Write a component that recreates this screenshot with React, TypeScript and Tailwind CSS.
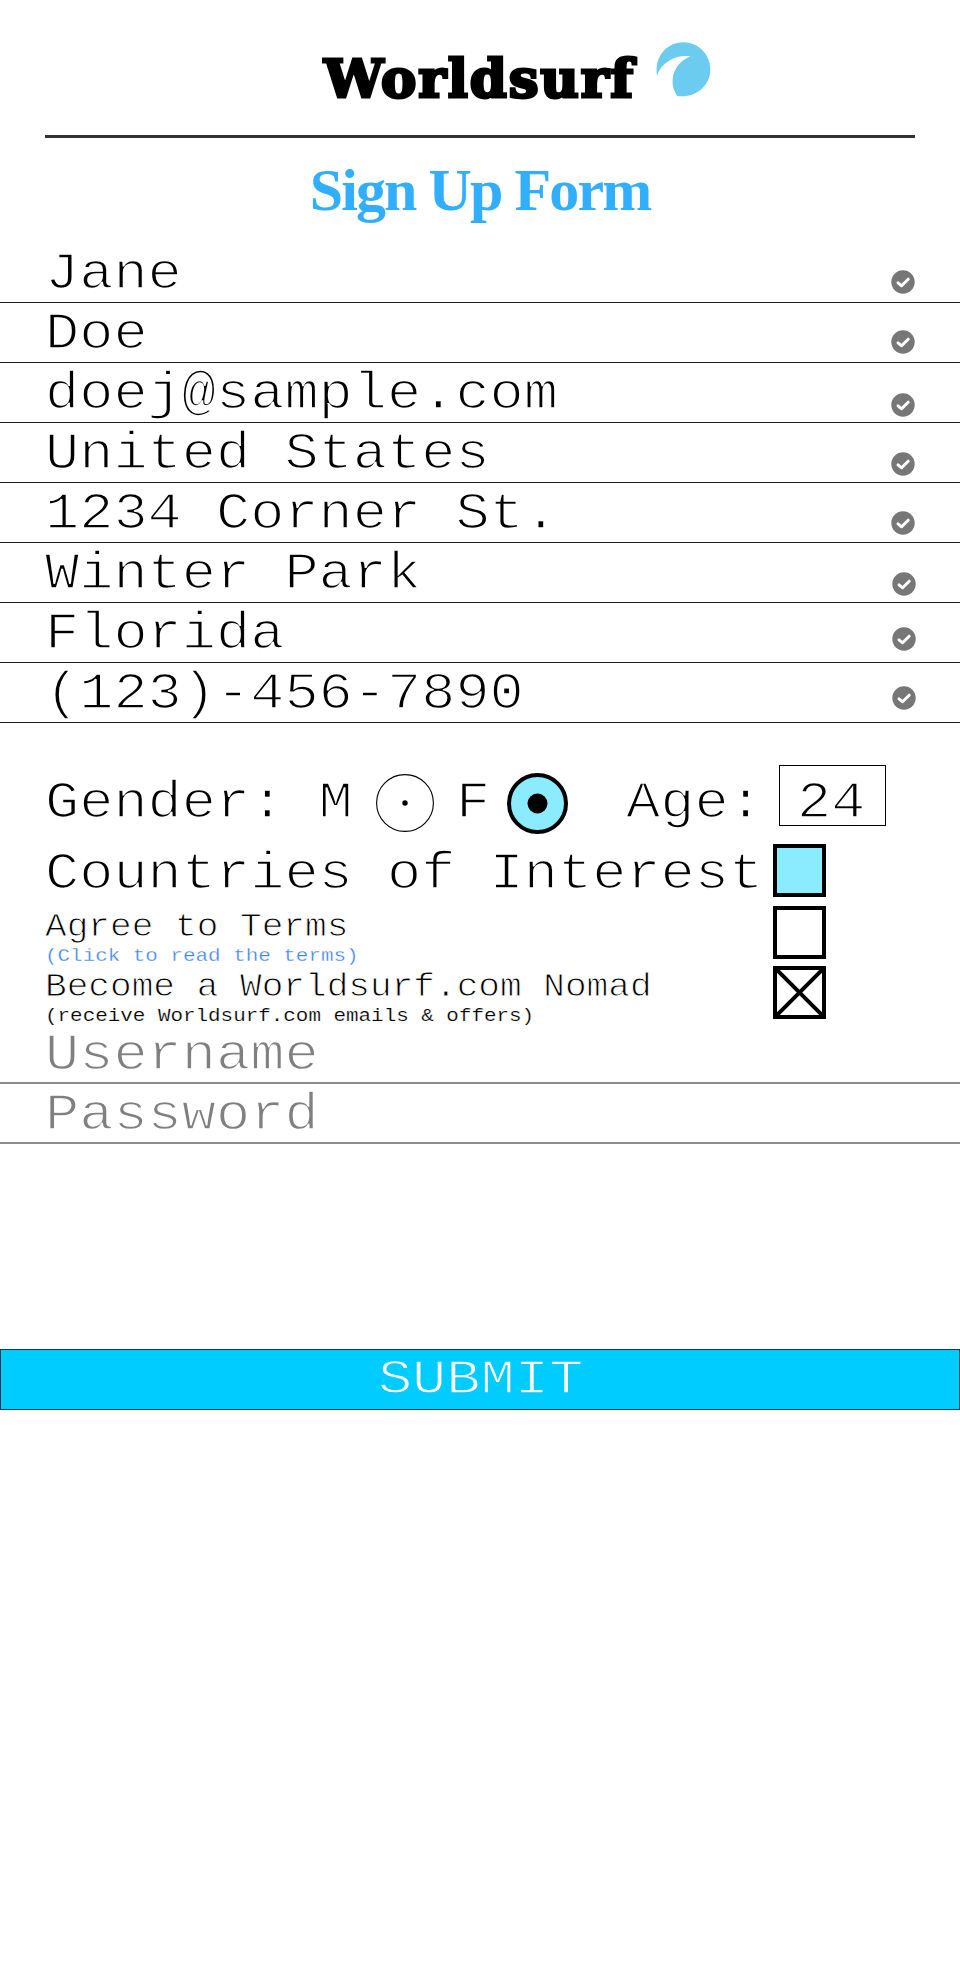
import React from "react";

const fields = [
  { value: "Jane", icon: "mt-[27px] mr-[45px]" },
  { value: "Doe", icon: "mt-[27px] mr-[45px]" },
  { value: "doej@sample.com", icon: "mt-[30px] mr-[45px]" },
  { value: "United States", icon: "mt-[29px] mr-[45px]" },
  { value: "1234 Corner St.", icon: "mt-[28px] mr-[45px]" },
  { value: "Winter Park", icon: "mt-[29px] mr-[44px]" },
  { value: "Florida", icon: "mt-[24px] mr-[44px]" },
  { value: "(123)-456-7890", icon: "mt-[23px] mr-[44px]" },
];

function Mono({ className = "", children }: { className?: string; children: React.ReactNode }) {
  return (
    <span
      className={`-ml-px block origin-left scale-x-[1.096] whitespace-pre text-[52px] leading-[64px] [-webkit-text-stroke:1.6px_#fff] ${className}`}
    >
      {children}
    </span>
  );
}

function CheckBadge({ className }: { className: string }) {
  return (
    <svg viewBox="0 0 24 24" className={`h-6 w-6 shrink-0 ${className}`}>
      <circle cx="12" cy="12" r="11.7" fill="#777" />
      <path d="M7 12.9l3.6 2.9 6.6-6.6" fill="none" stroke="#fff" strokeWidth="3" strokeLinecap="round" strokeLinejoin="round" />
    </svg>
  );
}

function Wave() {
  return (
    <svg viewBox="1067 65 164 166" className="mt-[42px] ml-[17px] h-[55px] w-[55px]">
      <path
        d="M1069 167C1060 108 1100 66 1149 66C1194 66 1230 103 1230 148C1230 197 1185 236 1130 228C1121 213 1116 202 1116 182C1117 150 1136 122 1170 108C1125 103 1083 125 1069 167Z"
        fill="#6bccf0"
      />
    </svg>
  );
}

export default function App() {
  return (
    <div className="min-h-[1981px] w-[960px] overflow-hidden bg-white font-['Liberation_Mono',monospace] text-black">
      <header className="mx-[45px] flex h-[138px] border-b-[3px] border-[#333] pl-[279px]">
        <div className="mt-[44px] w-[315px] font-['DejaVu_Serif',serif] text-[53px] leading-[68px] font-bold tracking-[1.8px] whitespace-nowrap [-webkit-text-stroke:3px_#000] [stroke-linejoin:round]">
          Worldsurf
        </div>
        <Wave />
      </header>

      <h1 className="h-[105px] pt-[18px] text-center font-['Liberation_Serif',serif] text-[60px] leading-[68px] font-bold tracking-[-1.9px] text-[#32aeff]">
        Sign Up Form
      </h1>

      <section>
        {fields.map((f) => (
          <div key={f.value} className="flex h-[60px] justify-between border-b border-[#1c1c1c] pl-[46px]">
            <Mono>{f.value}</Mono>
            <CheckBadge className={f.icon} />
          </div>
        ))}
      </section>

      <section className="mt-[42px] flex h-[79px] pl-[46px]">
        <div className="mt-[7px] w-[330px]">
          <Mono>Gender: M</Mono>
        </div>
        <svg viewBox="0 0 58 58" className="mt-[9px] h-[58px] w-[58px]">
          <circle cx="29" cy="29" r="28.4" fill="#fff" stroke="#000" strokeWidth="1.1" />
          <circle cx="29" cy="29" r="2.7" />
        </svg>
        <div className="mt-[7px] ml-[23px] w-[50px]">
          <Mono>F</Mono>
        </div>
        <svg viewBox="0 0 61 61" className="mt-[8px] h-[61px] w-[61px]">
          <circle cx="30.5" cy="30.5" r="28.5" fill="#8cecff" stroke="#000" strokeWidth="4" />
          <circle cx="30.5" cy="30.5" r="10" />
        </svg>
        <div className="mt-[7px] ml-[59px] w-[152px]">
          <Mono>Age:</Mono>
        </div>
        <div className="h-[61px] w-[107px] border border-black pt-[6px] pl-[18px]">
          <Mono>24</Mono>
        </div>
      </section>

      <section className="flex h-[181px] pl-[46px]">
        <div className="w-[727px]">
          <div className="h-[61px]">
            <Mono className="leading-[61px]!">Countries of Interest</Mono>
          </div>
          <div className="h-10">
            <Mono className="scale-x-[1.094]! text-[33px]! leading-[45px]! [-webkit-text-stroke:0.9px_#fff]!">Agree to Terms</Mono>
          </div>
          <div className="h-5">
            <Mono className="scale-x-[1.1]! text-[19px]! leading-[23px]! text-[#3c84e8] [-webkit-text-stroke:0.3px_#fff]!">
              (Click to read the terms)
            </Mono>
          </div>
          <div className="h-10">
            <Mono className="scale-x-[1.094]! text-[33px]! leading-[45px]! [-webkit-text-stroke:0.9px_#fff]!">
              Become a Worldsurf.com Nomad
            </Mono>
          </div>
          <div className="h-5">
            <Mono className="scale-x-[1.1]! text-[19px]! leading-[23px]! [-webkit-text-stroke:0.2px_#fff]!">
              {"(receive Worldsurf.com emails & offers)"}
            </Mono>
          </div>
        </div>
        <div className="w-[53px]">
          <div className="h-[53px] border-4 border-black bg-[#8cecff]" />
          <div className="mt-[9px] h-[53px] border-4 border-black" />
          <div className="mt-[7px] h-[53px] border-4 border-black">
            <svg viewBox="0 0 45 45" className="h-[45px] w-[45px]">
              <path d="M0 0L45 45M45 0L0 45" stroke="#000" strokeWidth="4" />
            </svg>
          </div>
        </div>
      </section>

      <section className="text-[#808080]">
        <div className="h-[59px] border-b-2 border-[#8c8c8c] pl-[46px]">
          <Mono className="leading-[61px]! [-webkit-text-stroke:1.4px_#fff]!">Username</Mono>
        </div>
        <div className="h-[60px] border-b-2 border-[#8c8c8c] pl-[46px]">
          <Mono className="[-webkit-text-stroke:1.4px_#fff]!">Password</Mono>
        </div>
      </section>

      <button className="mt-[205px] flex h-[61px] w-full justify-center border border-[#033a4c] bg-[#00ccff] text-white">
        <Mono className="ml-0.5! origin-center! scale-x-[1.2]! text-[47.5px]! leading-[60px]! [-webkit-text-stroke:1.3px_#00ccff]!">
          SUBMIT
        </Mono>
      </button>
    </div>
  );
}
